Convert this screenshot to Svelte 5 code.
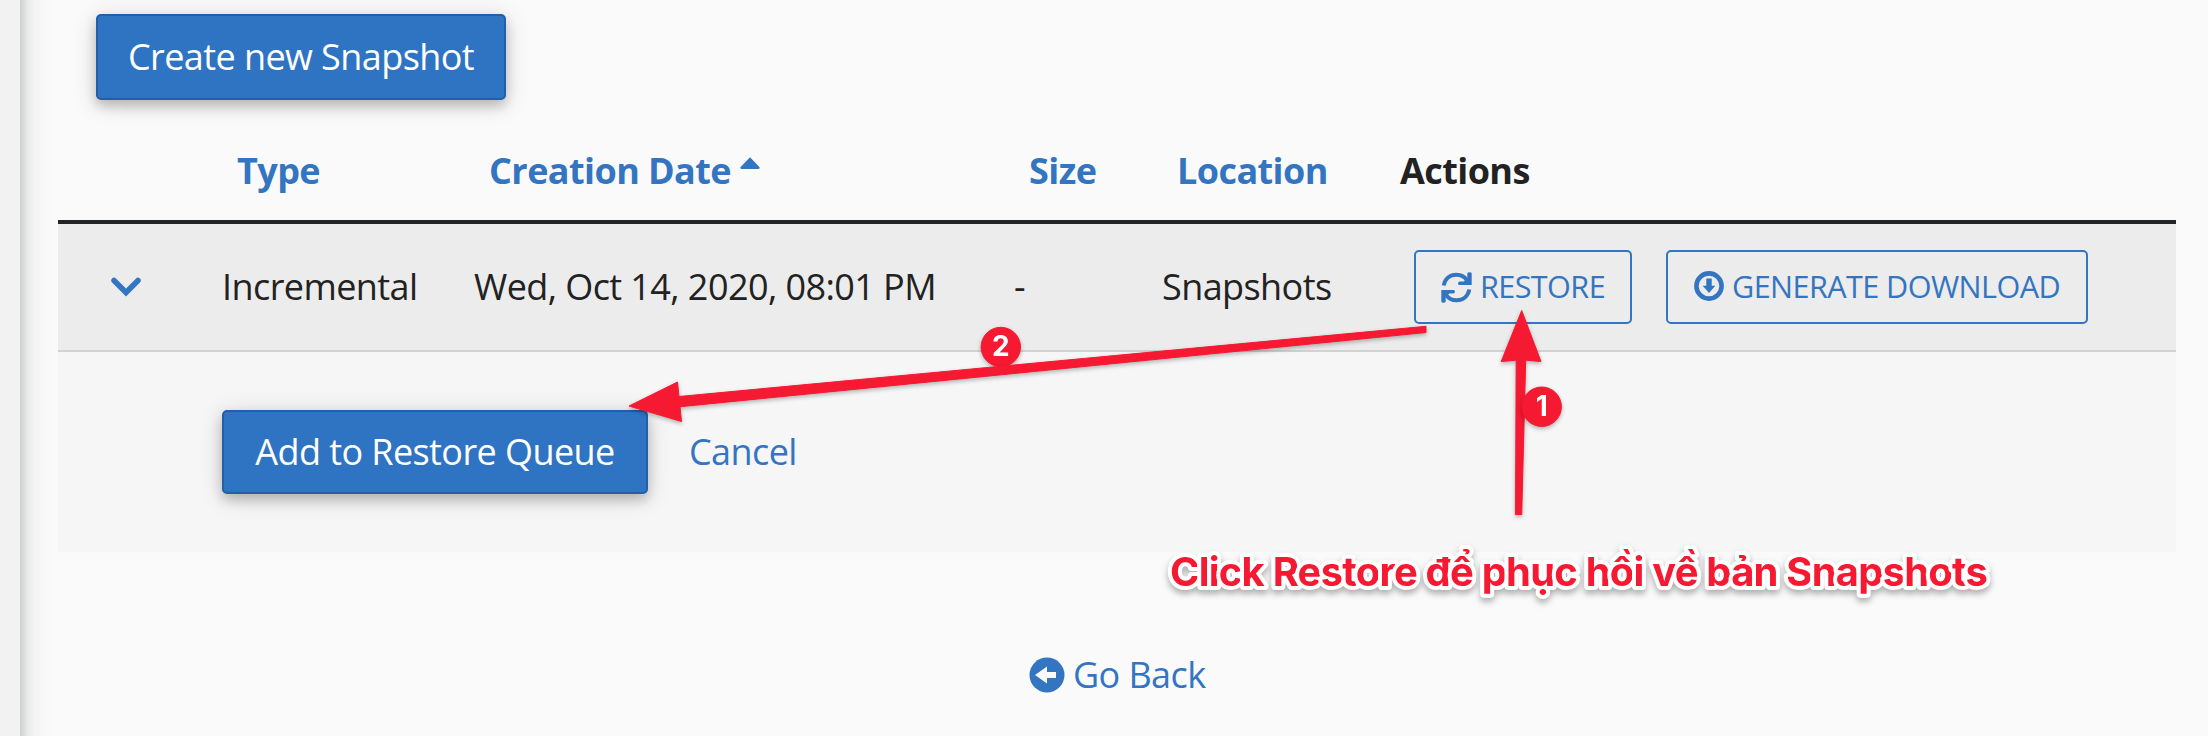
<script lang="ts">
  let snapshots = [
    { type: 'Incremental', date: 'Wed, Oct 14, 2020, 08:01 PM', size: '-', location: 'Snapshots' }
  ];
</script>

<div class="page">
  <div class="rail"></div>
  <main>
    <button class="primary create"><span>Create new Snapshot</span></button>

    <div class="table">
      <div class="row head">
        <span></span>
        <a class="type">Type</a>
        <a class="date">Creation Date
          <svg width="20" height="12" viewBox="0 0 20 12"><path d="M10 0.3 19.6 10.2Q20 12 18.4 12H1.6Q0 12 .4 10.2Z" fill="currentColor" /></svg>
        </a>
        <a class="size">Size</a>
        <a class="location">Location</a>
        <span class="actions-title">Actions</span>
      </div>

      {#each snapshots as snap}
        <div class="row item">
          <svg class="chevron" width="30" height="20" viewBox="0 0 30 20"><path d="M3 3.5 15 15.5 27 3.5" fill="none" stroke="currentColor" stroke-width="5.5" stroke-linecap="round" /></svg>
          <span>{snap.type}</span>
          <span>{snap.date}</span>
          <span>{snap.size}</span>
          <span>{snap.location}</span>
          <div class="actions">
            <button class="outline restore">
              <svg width="31" height="31" viewBox="0 0 31 31"><path d="M2.7 13.5C4 6.5 9 2.7 15.5 2.7c4.500 0 8 1.800 10.400 5.400M28.300 17.500C27 24.500 22 28.300 15.500 28.300c-4.500 0-8-1.800-10.400-5.400" fill="none" stroke="currentColor" stroke-width="4" /><path d="M26.3 1.5Q26.300.3 28.500.3T30.700 1.500V13H18.500Q17 13 17 11.500T18.500 9.500H22.500L26.300 7zM4.700 29.500Q4.700 30.700 2.500 30.700T.3 29.500V18H12.500Q14 18 14 19.500T12.500 21.500H8.500L4.700 24z" fill="currentColor" /></svg>
              <span>RESTORE</span>
            </button>
            <button class="outline download">
              <svg width="30" height="30" viewBox="0 0 30 30"><circle cx="15" cy="15" r="12.6" fill="none" stroke="currentColor" stroke-width="4.6" /><path d="M12.3 7.5h5.4v7.2h3.6L15 22l-6.3-7.3h3.6z" fill="currentColor" /></svg>
              <span>GENERATE DOWNLOAD</span>
            </button>
          </div>
        </div>
        <div class="confirm">
          <button class="primary queue"><span>Add to Restore Queue</span></button>
          <a>Cancel</a>
        </div>
      {/each}
    </div>

    <a class="back">
      <svg width="36" height="36" viewBox="0 0 36 36"><circle cx="18" cy="18" r="17.5" fill="currentColor" /><path d="M6 18 18 9.500V15H27V21H18V26.500Z" fill="#fafafa" /></svg>
      <span>Go Back</span>
    </a>
  </main>

  <!-- tutorial annotations drawn over the page -->
  <svg class="notes" width="2208" height="736" viewBox="0 0 2208 736">
    <g class="mark">
      <circle cx="1000.8" cy="347" r="19.7" />
      <text class="num" x="1000.8" y="356">2</text>
    </g>
    <g class="mark">
      <path d="M629 406 677.5 382 679 396.5 1426 326.3V332.5L680 406.7 681.5 421.5Z" />
      <path d="M1521.7 310.5 1541 361.5 1525.7 360.2 1521.7 514.5H1515.5L1516.2 360.2 1501.2 361.5Z" />
    </g>
    <g class="mark">
      <circle cx="1541.7" cy="406.7" r="19.7" />
      <text class="num" x="1541.7" y="416">1</text>
    </g>
    <text class="caption" x="1170" y="585.5" textLength="818">Click Restore để phục hồi về bản Snapshots</text>
  </svg>
</div>

<style>
:global(body) {
  margin: 0;
  background: #fafafa;
}

.page {
  position: relative;
  display: flex;
  width: 2208px;
  height: 736px;
  overflow: hidden;
  font-family: "Open Sans", "Noto Sans", sans-serif;
  font-size: 36px;
  line-height: 50px;
  letter-spacing: -0.58px;
  color: #222;
}

.rail {
  width: 20px;
  background: #f2f2f2;
}

main {
  flex: 1;
  display: flex;
  flex-direction: column;
  padding: 14px 32px 0 38px;
  background: linear-gradient(90deg, #cdcfce 0, #dcdedd 4px, #e9eaea 8px, #f3f3f3 14px, #f8f8f8 24px, #fafafa 32px);
}

a {
  color: #3375c1;
  white-space: nowrap;
}

svg {
  flex: none;
}

span {
  white-space: nowrap;
}

button {
  display: flex;
  align-items: center;
  justify-content: center;
  box-sizing: border-box;
  padding: 0;
  font: inherit;
  letter-spacing: inherit;
}

.primary {
  color: #fff;
  background: #2f73c3;
  border: 2px solid #2160a8;
  border-radius: 5px;
  box-shadow: 0 6px 12px rgba(0, 0, 0, 0.2), 0 4px 26px rgba(0, 0, 0, 0.14);
}

.create {
  width: 410px;
  height: 86px;
  margin-left: 38px;
}

.table {
  margin-top: 46px;
}

.row {
  display: grid;
  grid-template-columns: 164px 252px 540px 148px 252px 1fr;
  align-items: center;
}

.head {
  height: 74px;
  border-bottom: 4px solid #222426;
  font-weight: 700;
}

.head > * {
  padding-left: 15px;
  margin-top: -24px;
}

.date svg {
  margin-bottom: 15px;
}

.head .actions-title {
  padding: 0;
  margin-left: -14px;
}

.item {
  height: 126px;
  background: #ececec;
  border-bottom: 2px solid #d2d2d2;
}

.chevron {
  margin-left: 53px;
  color: #3375c1;
}

.actions {
  display: flex;
  gap: 34px;
}

.outline {
  height: 74px;
  gap: 8px;
  color: #3375c1;
  background: transparent;
  border: 2px solid #3375c1;
  border-radius: 5px;
  font-size: 30.6px;
}

.outline span {
  padding-bottom: 2px;
}

.restore {
  width: 218px;
}

.download {
  width: 422px;
}

.download svg {
  margin-bottom: 3px;
}

.confirm {
  display: flex;
  align-items: center;
  gap: 41px;
  height: 200px;
  padding-left: 164px;
  background: #f6f6f6;
}

.queue {
  width: 426px;
  height: 84px;
}

.back {
  display: flex;
  align-items: center;
  gap: 8px;
  margin: 98px 0 0 971px;
}

.notes {
  position: absolute;
  inset: 0;
  letter-spacing: 0;
}

.mark {
  fill: #f51932;
  stroke: #f51932;
  stroke-width: 1;
  stroke-linejoin: round;
  filter: drop-shadow(0 2px 2px rgba(0, 0, 0, 0.28));
}

.num {
  fill: #fff;
  stroke: none;
  font: 700 28px Inter, sans-serif;
  text-anchor: middle;
}

.caption {
  fill: #f51932;
  stroke: #fff;
  stroke-width: 8px;
  stroke-linejoin: round;
  paint-order: stroke;
  font: 700 40px Inter, sans-serif;
  filter: drop-shadow(0 4px 3px rgba(0, 0, 0, 0.3));
}
</style>
